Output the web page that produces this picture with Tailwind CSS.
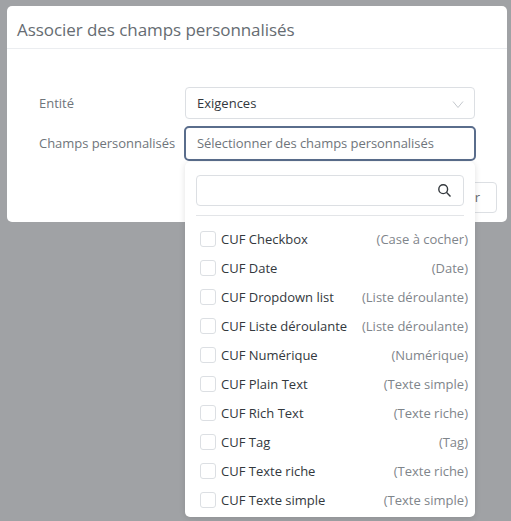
<!DOCTYPE html>
<html lang="fr">
<head>
    <meta charset="UTF-8">
    <meta name="viewport" content="width=device-width, initial-scale=1.0">
    <title>Associer des champs personnalisés</title>
    <script src="https://cdn.jsdelivr.net/npm/@tailwindcss/browser@4"></script>
</head>
<body class="h-[521px] w-[511px] overflow-hidden bg-[#a0a2a5] font-['Open_Sans','Noto_Sans',sans-serif]">

    <!-- Modal -->
    <div class="relative ml-[7px] mt-[6px] h-[216px] w-[500px] rounded-[5px] bg-white">
        <div class="h-[43px] border-b border-[#ebedf0] pl-[10px] pt-[9px] text-[17px] leading-[30px] tracking-[-0.06px] text-[#666c72]">Associer des champs personnalisés</div>

        <div class="flex flex-col gap-[7px] pl-[32px] pt-[38px]">
            <div class="flex items-center">
                <label class="w-[146px] pt-[1px] text-[13px] text-[#6f757b]">Entité</label>
                <div class="flex h-[32px] w-[290px] items-center justify-between rounded-[4px] border border-[#dcdfe3] pl-[11px] pr-[10px] pt-[1px] text-[13px] text-[#33383d]">
                    <span>Exigences</span>
                    <svg class="h-[12px] w-[12px] text-[#c4c8cd]" viewBox="0 0 12 12" fill="none" stroke="currentColor" stroke-width="1"><path d="M1 3.5 6 9.5 11 3.5"/></svg>
                </div>
            </div>
            <div class="flex items-center">
                <label class="w-[145px] text-[13px] tracking-[-0.04px] text-[#6f757b]">Champs personnalisés</label>
                <div class="flex h-[35px] w-[292px] items-center rounded-[5px] border-2 border-[#5a6d8c] pl-[11px] text-[13px] tracking-[-0.05px] text-[#6f757b]">Sélectionner des champs personnalisés</div>
            </div>
        </div>

        <!-- Button behind the dropdown -->
        <div class="absolute right-[10px] top-[176px] flex h-[31px] w-[100px] items-center justify-end rounded-[4px] border border-[#dcdfe3] pr-[16px] text-[13px] text-[#666c72]">Annuler</div>

        <!-- Dropdown -->
        <div class="absolute left-[178px] top-[156px] h-[355px] w-[290px] rounded-[5px] bg-white px-[11px] pt-[13px] shadow-[0_1px_6px_rgba(0,0,0,0.12)]">
            <div class="flex h-[31px] items-center justify-end rounded-[4px] border border-[#dcdfe3] pr-[11px]">
                <svg class="h-[15px] w-[15px] text-[#33383d]" viewBox="0 0 15 15" fill="none" stroke="currentColor" stroke-width="1.4"><circle cx="6.2" cy="6.2" r="4.4"/><path d="M9.6 9.6 13.5 13.5"/></svg>
            </div>
            <div class="mt-[9px] border-t border-[#e3e5e8]"></div>
            <ul class="mt-[9px] flex flex-col text-[13px]">
                <li class="flex h-[29px] items-center pl-[4px]">
                    <span class="mb-[2px] h-[16px] w-[16px] shrink-0 rounded-[3px] border border-[#dcdfe3]"></span>
                    <span class="ml-[5px] text-[#33383d]">CUF Checkbox</span>
                    <span class="-mr-[4px] ml-auto text-[#7f858b]">(Case à cocher)</span>
                </li>
                <li class="flex h-[29px] items-center pl-[4px]">
                    <span class="mb-[2px] h-[16px] w-[16px] shrink-0 rounded-[3px] border border-[#dcdfe3]"></span>
                    <span class="ml-[5px] text-[#33383d]">CUF Date</span>
                    <span class="-mr-[4px] ml-auto text-[#7f858b]">(Date)</span>
                </li>
                <li class="flex h-[29px] items-center pl-[4px]">
                    <span class="mb-[2px] h-[16px] w-[16px] shrink-0 rounded-[3px] border border-[#dcdfe3]"></span>
                    <span class="ml-[5px] text-[#33383d]">CUF Dropdown list</span>
                    <span class="-mr-[4px] ml-auto text-[#7f858b]">(Liste déroulante)</span>
                </li>
                <li class="flex h-[29px] items-center pl-[4px]">
                    <span class="mb-[2px] h-[16px] w-[16px] shrink-0 rounded-[3px] border border-[#dcdfe3]"></span>
                    <span class="ml-[5px] text-[#33383d]">CUF Liste déroulante</span>
                    <span class="-mr-[4px] ml-auto text-[#7f858b]">(Liste déroulante)</span>
                </li>
                <li class="flex h-[29px] items-center pl-[4px]">
                    <span class="mb-[2px] h-[16px] w-[16px] shrink-0 rounded-[3px] border border-[#dcdfe3]"></span>
                    <span class="ml-[5px] text-[#33383d]">CUF Numérique</span>
                    <span class="-mr-[4px] ml-auto text-[#7f858b]">(Numérique)</span>
                </li>
                <li class="flex h-[29px] items-center pl-[4px]">
                    <span class="mb-[2px] h-[16px] w-[16px] shrink-0 rounded-[3px] border border-[#dcdfe3]"></span>
                    <span class="ml-[5px] text-[#33383d]">CUF Plain Text</span>
                    <span class="-mr-[4px] ml-auto text-[#7f858b]">(Texte simple)</span>
                </li>
                <li class="flex h-[29px] items-center pl-[4px]">
                    <span class="mb-[2px] h-[16px] w-[16px] shrink-0 rounded-[3px] border border-[#dcdfe3]"></span>
                    <span class="ml-[5px] text-[#33383d]">CUF Rich Text</span>
                    <span class="-mr-[4px] ml-auto text-[#7f858b]">(Texte riche)</span>
                </li>
                <li class="flex h-[29px] items-center pl-[4px]">
                    <span class="mb-[2px] h-[16px] w-[16px] shrink-0 rounded-[3px] border border-[#dcdfe3]"></span>
                    <span class="ml-[5px] text-[#33383d]">CUF Tag</span>
                    <span class="-mr-[4px] ml-auto text-[#7f858b]">(Tag)</span>
                </li>
                <li class="flex h-[29px] items-center pl-[4px]">
                    <span class="mb-[2px] h-[16px] w-[16px] shrink-0 rounded-[3px] border border-[#dcdfe3]"></span>
                    <span class="ml-[5px] text-[#33383d]">CUF Texte riche</span>
                    <span class="-mr-[4px] ml-auto text-[#7f858b]">(Texte riche)</span>
                </li>
                <li class="flex h-[29px] items-center pl-[4px]">
                    <span class="mb-[2px] h-[16px] w-[16px] shrink-0 rounded-[3px] border border-[#dcdfe3]"></span>
                    <span class="ml-[5px] text-[#33383d]">CUF Texte simple</span>
                    <span class="-mr-[4px] ml-auto text-[#7f858b]">(Texte simple)</span>
                </li>
            </ul>
        </div>
    </div>
</body>
</html>
